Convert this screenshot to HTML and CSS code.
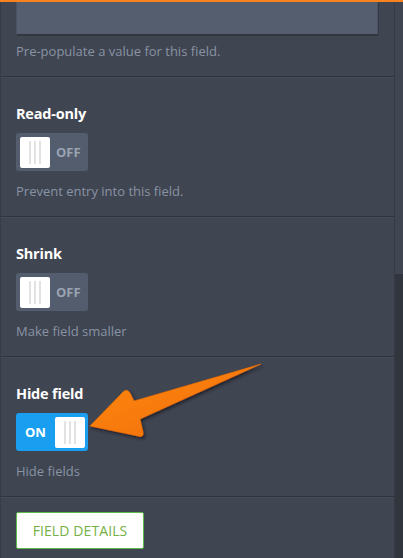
FILE: index.html
```html
<!DOCTYPE html>
<html>
<head>
<meta charset="utf-8">
<link rel="stylesheet" href="styles.css">
</head>
<body>
<div class="frame">
  <div class="panel">
    <section class="sec sec-first">
      <div class="textarea"></div>
      <p class="desc desc-first">Pre-populate a value for this field.</p>
    </section>
    <section class="sec">
      <h3 class="title">Read-only</h3>
      <div class="toggle off"><span class="knob"><i></i><i></i><i></i></span><span class="lbl">OFF</span></div>
      <p class="desc">Prevent entry into this field.</p>
    </section>
    <section class="sec">
      <h3 class="title">Shrink</h3>
      <div class="toggle off"><span class="knob"><i></i><i></i><i></i></span><span class="lbl">OFF</span></div>
      <p class="desc">Make field smaller</p>
    </section>
    <section class="sec">
      <h3 class="title">Hide field</h3>
      <div class="toggle on"><span class="lbl">ON</span><span class="knob"><i></i><i></i><i></i></span></div>
      <p class="desc">Hide fields</p>
    </section>
    <section class="sec sec-last">
      <button class="btn">FIELD DETAILS</button>
    </section>
  </div>
  <div class="scroll"><div class="thumb"></div></div>
  <svg class="arrow" width="403" height="558" viewBox="0 0 403 558">
    <defs>
      <linearGradient id="og" x1="0" y1="0" x2="1" y2="1">
        <stop offset="0" stop-color="#ff8a12"/>
        <stop offset="1" stop-color="#f06c00"/>
      </linearGradient>
      <filter id="sh" x="-20%" y="-20%" width="140%" height="140%">
        <feDropShadow dx="1.5" dy="2" stdDeviation="1.5" flood-color="#1a1d22" flood-opacity="0.8"/>
      </filter>
    </defs>
    <path d="M90 426 L123 392 Q127 388 130 393 L134 401 L261 364 L140 419 L143 432 Q144 438 138 436 Z" fill="url(#og)" filter="url(#sh)" stroke="#f27000" stroke-width="0.6" stroke-linejoin="round"/>
  </svg>
</div>
</body>
</html>
```
FILE: styles.css
```css
* { box-sizing: border-box; }
html, body { margin: 0; padding: 0; background: #3f4551; }
.frame {
  position: relative;
  width: 403px;
  height: 558px;
  overflow: hidden;
  display: flex;
  border-top: 2px solid #f7831f;
  background: #3f4551;
  font-family: "Open Sans", "Liberation Sans", sans-serif;
}
.panel {
  width: 394px;
  flex: none;
  border-left: 1px solid #363b45;
}
.scroll {
  width: 9px;
  flex: none;
  border-left: 1px solid #353a43;
  background: #31353d;
}
.thumb {
  height: 272px;
  background: #3f4551;
}
.sec {
  padding: 26px 15px 16px 15px;
  border-top: 1px solid #454b58;
  border-bottom: 1px solid #30353d;
}
.sec-first {
  padding-top: 0;
  border-top: none;
}
.sec-last {
  padding-top: 14px;
  border-bottom: none;
}
.textarea {
  width: 362px;
  height: 33px;
  background: #545e6e;
  border: 1px solid #4a5362;
  border-top: none;
  border-bottom-color: #30353e;
  box-shadow: 1px 1px 0 #343943;
}
.title {
  margin: 0;
  font-size: 14.5px;
  line-height: 20px;
  font-weight: 700;
  color: #ffffff;
  letter-spacing: -0.2px;
}
.desc {
  margin: 11px 0 0 0;
  font-size: 13px;
  line-height: 18px;
  color: #8993a4;
}
.desc-first { margin-top: 7px; }
.toggle {
  margin-top: 9px;
  width: 72px;
  height: 38px;
  border-radius: 3px;
  display: flex;
  align-items: center;
  padding: 0 3px 0 4px;
}
.toggle.off { background: #545d6d; }
.toggle.on { background: #1a9ff0; padding-left: 9px; }
.knob {
  width: 30px;
  height: 31px;
  background: #ffffff;
  border-radius: 2px;
  display: flex;
  justify-content: center;
  align-items: center;
  gap: 3px;
  flex: none;
}
.knob i {
  display: block;
  width: 2px;
  height: 23px;
  background: #e2e2e2;
}
.lbl {
  font-size: 13px;
  font-weight: 700;
  line-height: 16px;
}
.off .lbl { color: #9aa3b2; margin-left: 6px; }
.on .lbl { color: #ffffff; margin-right: 9px; width: 21px; }
.btn {
  display: block;
  width: 128px;
  height: 37px;
  padding: 0;
  background: #ffffff;
  border: 1px solid #5cba4a;
  border-radius: 2px;
  font-family: "Open Sans", "Liberation Sans", sans-serif;
  font-size: 14px;
  color: #76b146;
  letter-spacing: 0.1px;
}
.arrow {
  position: absolute;
  left: 0;
  top: -2px;
  pointer-events: none;
}
```
